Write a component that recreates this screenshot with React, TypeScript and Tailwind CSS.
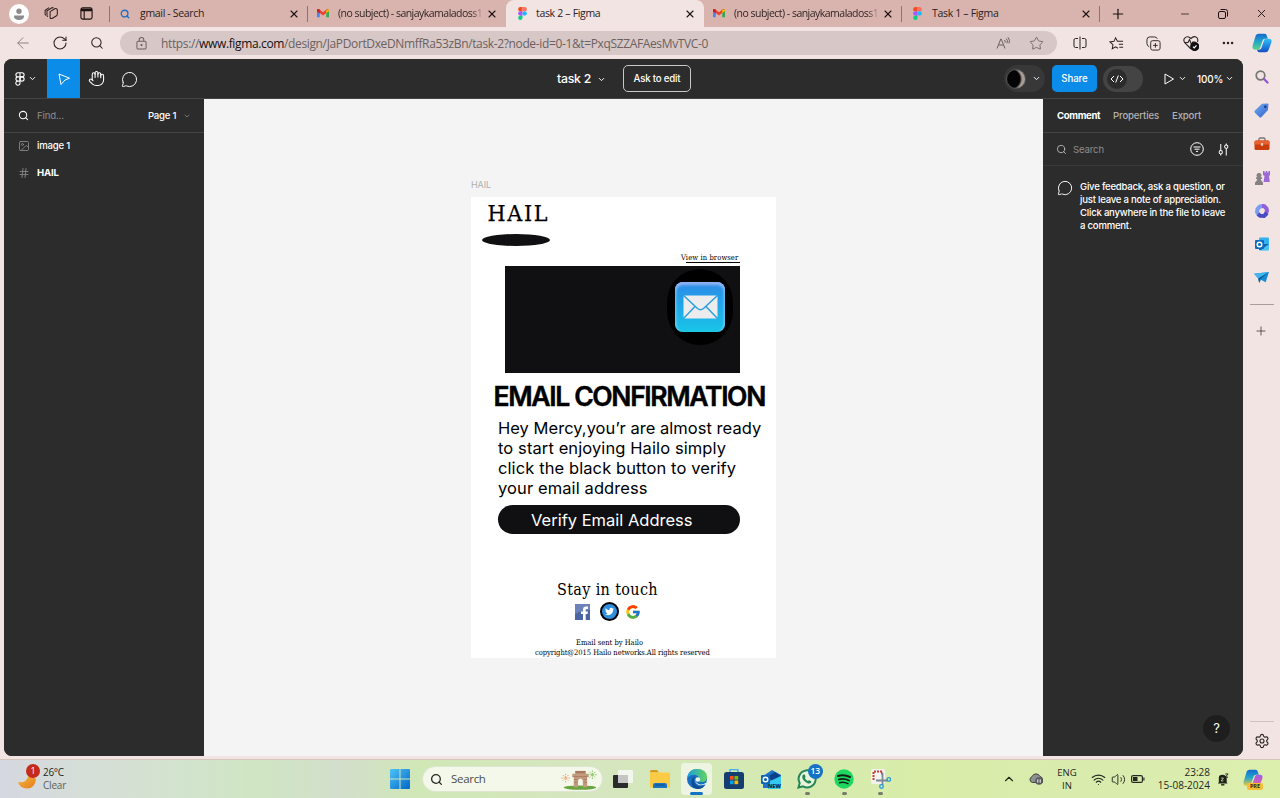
import React from "react";
import {
  ArrowLeft, ChevronDown, ChevronUp, Ellipsis, Hand, Hash, Image as ImageIcon,
  MessageCircle, Minus, Plus, RotateCw, Search, Settings, Star, Volume2, Wifi, X,
} from "lucide-react";
import { FcGoogle } from "react-icons/fc";

type P = { className?: string };

const Gmail = ({ className = "" }: P) => (
  <svg viewBox="0 0 24 18" className={className}>
    <path d="M0 2v14.5h5.5V7z" fill="#4285f4" />
    <path d="M24 2v14.5h-5.5V7z" fill="#34a853" />
    <path d="M0 2.5C0 0 2.8-.8 4.5.7L12 6.5 19.500.7C21.200-.8 24 0 24 2.500L18.500 8 12 13 5.500 8z" fill="#ea4335" />
    <path d="M18.500 1.500 24 .8V4l-5.500 4.300z" fill="#fbbc04" />
    <path d="M0 2v3l5.500 4V1.500C3-.5 0 0 0 2z" fill="#c5221f" />
  </svg>
);

const FigmaColor = ({ className = "" }: P) => (
  <svg viewBox="0 0 24 36" className={className}>
    <path d="M6 0h6v12H6A6 6 0 0 1 6 0z" fill="#f24e1e" />
    <path d="M12 0h6a6 6 0 0 1 0 12h-6z" fill="#ff7262" />
    <path d="M6 12h6v12H6a6 6 0 0 1 0-12z" fill="#a259ff" />
    <circle cx="18" cy="18" r="6" fill="#1abcfe" />
    <path d="M6 24h6v6a6 6 0 1 1-6-6z" fill="#0acf83" />
  </svg>
);

const Copilot = ({ className = "", pink = false }: P & { pink?: boolean }) => (
  <svg viewBox="0 0 24 24" className={className}>
    <defs>
      <linearGradient id={pink ? "cpA" : "cbA"} x1="0" y1="0" x2="0" y2="1">
        <stop offset="0" stopColor="#1769d2" />
        <stop offset=".5" stopColor="#23a7c8" />
        <stop offset="1" stopColor={pink ? "#f0c63e" : "#5bd28b"} />
      </linearGradient>
      <linearGradient id={pink ? "cpB" : "cbB"} x1="0" y1="0" x2="0" y2="1">
        <stop offset="0" stopColor={pink ? "#a25be8" : "#2fc0f5"} />
        <stop offset="1" stopColor={pink ? "#f0659a" : "#1450c8"} />
      </linearGradient>
    </defs>
    <path d="M8 1h7c2 0 2.500 1.500 3 3l1 3h-3c-2 0-3 1-3.600 3L10 17c-.6 2-1.500 3-3.500 3H3.500C1 20 0 18 .8 15L4 4.500C4.700 2 6 1 8 1z" fill={`url(#${pink ? "cpA" : "cbA"})`} />
    <path d="M16 23H9c-2 0-2.500-1.500-3-3h2c2 0 3-1 3.600-3L14 10c.6-2 1.500-3 3.500-3h3C23 7 24 8.500 23.200 11.500L20 20c-.7 2-2 3-4 3z" fill={`url(#${pink ? "cpB" : "cbB"})`} />
  </svg>
);

function Tab({ icon, title, active, sep, long }: { icon: React.ReactNode; title: string; active?: boolean; sep?: boolean; long?: boolean }) {
  return (
    <div className={`flex h-[27px] w-[198px] shrink-0 items-center ${sep ? "" : "pr-[8px]"} ${active ? "rounded-t-lg bg-[#f1e4e2]" : ""}`}>
      <div className="flex w-[30px] justify-center">{icon}</div>
      <div className={`w-[148px] whitespace-nowrap text-[10.500px] ${long ? "bg-[linear-gradient(to_right,#2b2020_90%,#cfa9a3_98%)] bg-clip-text tracking-[-0.520px] text-transparent" : "tracking-[-0.320px] text-[#2b2020]"}`}>
        {title}
      </div>
      <X size={12} strokeWidth={2.200} className="ml-auto shrink-0 text-[#1b1313]" />
      {sep && <div className="ml-[7px] h-4 w-px shrink-0 bg-[#8c7370]" />}
    </div>
  );
}

function TabStrip() {
  return (
    <div className="flex h-[27px] items-center bg-[#d9b4ae]">
      <div className="flex w-[109px] items-center">
        <div className="ml-[9px] flex size-5 items-center justify-center rounded-full bg-white">
          <svg viewBox="0 0 12 12" className="size-3" fill="#8c8c8c"><circle cx="6" cy="3.200" r="2.700" /><path d="M1 7.500h10v1c0 2-2 3.500-5 3.500s-5-1.500-5-3.500z" /></svg>
        </div>
        <svg viewBox="0 0 16 16" className="ml-[15px] size-[15px]" fill="none" stroke="#2b1e1c" strokeWidth="1.100">
          <path d="M6.500 6 11.500 3q2-.8 2.700 1v4.500q0 1.500-1.200 2.200l-4.500 2.600q-2 .6-2-1.300z" />
          <path d="M4 11.500q-.8-.4-.8-1.600V5l5.300-3.200q1-.3 1.500.5M1.800 10q-.6-.5-.6-1.500V4.500L5.500 1.800" />
        </svg>
        <svg viewBox="0 0 14 14" className="ml-[21px] size-[13px]" fill="none" stroke="#1b1211" strokeWidth="1.200">
          <rect x="1" y="1" width="12" height="12" rx="2" /><path d="M1 3.200h12" strokeWidth="2.800" /><path d="M4.500 4v9" />
        </svg>
      </div>
      <div className="h-4 w-px bg-[#8c7370]" />
      <div className="flex w-[990px] items-center">
        <Tab sep icon={<Search size={10} strokeWidth={3.200} className="text-[#1f6fc4]" />} title="gmail - Search" />
        <Tab long icon={<Gmail className="h-[9px] w-3" />} title="(no subject) - sanjaykamaladoss1" />
        <Tab active icon={<FigmaColor className="ml-[2px] h-[13px] w-[9px]" />} title="task 2 – Figma" />
        <Tab long sep icon={<Gmail className="h-[9px] w-3" />} title="(no subject) - sanjaykamaladoss1" />
        <Tab sep icon={<FigmaColor className="h-[13px] w-[9px]" />} title="Task 1 – Figma" />
      </div>
      <Plus size={16} strokeWidth={1.800} className="ml-[10px] text-[#1b1211]" />
      <Minus size={12} strokeWidth={1.500} className="ml-[53px] text-[#1b1211]" />
      <svg viewBox="0 0 10 10" className="ml-[27px] size-[10px]" fill="none" stroke="#1b1211" strokeWidth="1"><rect x=".5" y="2.500" width="7" height="7" rx="1.500" /><path d="M2.500.5h5q2 0 2 2v5" /></svg>
      <X size={13} strokeWidth={1.700} className="ml-[27px] text-[#1b1211]" />
    </div>
  );
}

const cell = "flex w-[37px] shrink-0 items-center justify-center";

function AddressBar() {
  return (
    <div className="flex h-8 items-center bg-[#f1e4e2] text-[#2b2322]">
      <div className="flex w-[120px] pl-[4px]">
        <div className={cell}><ArrowLeft size={18} strokeWidth={1.300} className="text-[#8d8180]" /></div>
        <div className={cell}><RotateCw size={16} strokeWidth={1.600} /></div>
        <div className={cell}><Search size={14} strokeWidth={1.800} /></div>
      </div>
      <div className="flex h-6 w-[937px] items-center rounded-full bg-[#d7c8c7] text-[#6b6160]">
        <svg viewBox="0 0 12 14" className="ml-[16px] h-[13px] w-[11px]" fill="none" stroke="currentColor" strokeWidth="1.100"><rect x="1" y="4.500" width="10" height="8.500" rx="1.500" /><path d="M3.500 4.500V3a2.500 2.500 0 0 1 5 0v1.500" /><circle cx="6" cy="8.700" r=".7" fill="currentColor" /></svg>
        <div className="ml-[14px] mt-px w-[830px] whitespace-nowrap text-[12px] tracking-[-0.360px]">
          https://<span className="text-[#161010]">www.figma.com</span>/design/JaPDortDxeDNmffRa53zBn/task-2?node-id=0-1&amp;t=PxqSZZAFAesMvTVC-0
        </div>
        <div className="flex w-[24px] justify-center">
          <svg viewBox="0 0 14 12" className="h-3 w-[14px]" fill="none" stroke="currentColor" strokeWidth="1"><path d="M1 11.500 4.800 2h.4L9 11.500M2.500 8h5M8.500 3q1 1 .6 2.700M10.200 1.500q2 2 .8 4.700M12 .3q2.400 3 1 6" /></svg>
        </div>
        <div className="flex w-[42px] justify-center"><Star size={15} strokeWidth={1.400} /></div>
      </div>
      <div className="ml-[4px] flex">
        <div className={cell}><svg viewBox="0 0 14 14" className="size-[14px]" fill="none" stroke="currentColor"><path d="M7 .5v13M5 2.500H2.500q-1.500 0-1.500 1.500v6q0 1.500 1.500 1.500H5M9 2.500h2.500Q13 2.500 13 4v6q0 1.500-1.500 1.500H9" /></svg></div>
        <div className={cell}><svg viewBox="0 0 16 16" className="size-[15px]" fill="none" stroke="currentColor" strokeWidth="1.100"><path d="M9.500 13 7 11.500 3.500 13.500l.7-4.200L1 6.300l4.300-.6L7 2l2 3.700h6M10.500 8.700H15M11 12h4" /></svg></div>
        <div className={cell}><svg viewBox="0 0 16 16" className="size-[15px]" fill="none" stroke="currentColor" strokeWidth="1"><rect x="5" y="5" width="10" height="10" rx="2" /><path d="M10 7.500v5M7.500 10h5M3.500 11.500Q1 10.500 1 8V4q0-3 3-3h5q2.500 0 3 2" /></svg></div>
        <div className={cell}><svg viewBox="0 0 16 16" className="size-[16px]" fill="none" stroke="currentColor" strokeWidth="1.100"><path d="M8 14 2 8Q0 5.500 1.500 3.300 4.500 0 8 3.500 11.500 0 14.200 3 15.300 5 14.500 7" /><path d="M1.500 7.500H5l1.500-3 2 5 1.300-2.500h2.700" /><circle cx="11.700" cy="11.500" r="4" fill="#111" stroke="#111" /><path d="m10 11.700 1.200 1.200 2.300-2.600" stroke="#fff" /></svg></div>
        <div className={cell}><Ellipsis size={14} strokeWidth={2.300} /></div>
      </div>
      <Copilot className="ml-[6px] size-[20px]" />
    </div>
  );
}

const Cursor = ({ className = "" }: P) => (
  <svg viewBox="0 0 12 12" className={className} fill="none" stroke="white" strokeWidth="1" strokeLinejoin="round"><path d="M1 1l10.500 4.200L7 7l-4 4.500z" /></svg>
);

function Toolbar() {
  return (
    <div className="flex h-10 items-center border-b border-[#444] bg-[#2c2c2c] text-white">
      <div className="flex w-[43px] items-center pl-[11px]">
        <svg viewBox="0 0 10 14" className="h-[14px] w-[10px]" fill="none" stroke="white" strokeWidth="1.100"><path d="M5 .7H3a2.100 2.100 0 0 0 0 4.200h2zM5 .7h2a2.100 2.100 0 0 1 0 4.200H5zM5 4.900H3a2.100 2.100 0 0 0 0 4.200h2zM5 9.100H3a2.100 2.100 0 1 0 2 2.100z" /><circle cx="7" cy="7" r="2.100" /></svg>
        <ChevronDown size={9} strokeWidth={2.500} className="ml-[3px]" />
      </div>
      <div className="flex h-[39px] w-[33px] items-center justify-center bg-[#0c8ce9]"><Cursor className="size-3" /></div>
      <div className="flex w-[33px] justify-center"><Hand size={17} strokeWidth={1.500} /></div>
      <div className="flex w-[33px] justify-center"><MessageCircle size={17} strokeWidth={1.400} className="mt-px" /></div>
      <div className="ml-[411px] w-[66px] pt-px text-[12.300px] font-medium tracking-[-0.250px]">
        <div className="flex items-center"><span className="w-[40px] whitespace-nowrap">task 2</span><ChevronDown size={9} strokeWidth={2.500} /></div>
      </div>
      <div className="flex h-[27px] w-[68px] items-center justify-center rounded-[5px] border border-[#c8c8c8] pt-[2px] text-[9.700px] font-medium tracking-[-0.200px]">Ask to edit</div>
      <div className="ml-[313px] flex h-[27px] w-[41px] items-center rounded-full bg-[#383838] pl-[2px]">
        <div className="size-5 rounded-full border border-[#555] bg-[radial-gradient(circle_at_20%_50%,#050505_55%,#a89d96_68%)]" />
        <ChevronDown size={9} strokeWidth={2.500} className="ml-[6px]" />
      </div>
      <div className="ml-[7px] flex h-[27px] w-[45px] items-center justify-center rounded-[5px] bg-[#0c8ce9] pt-[2px] text-[9.700px] font-medium tracking-[-0.100px]">Share</div>
      <div className="ml-[6px] flex h-[26px] w-10 items-center rounded-full bg-[#444] pl-[4px]">
        <div className="flex size-[20px] items-center justify-center rounded-full bg-[#2c2c2c]">
          <svg viewBox="0 0 14 8" className="h-2 w-[14px]" fill="none" stroke="white" strokeWidth="1"><path d="M4 1 1 4l3 3M10 1l3 3-3 3M8.300.5l-2.600 7" /></svg>
        </div>
      </div>
      <svg viewBox="0 0 10 12" className="ml-[21px] h-3 w-[10px]" fill="none" stroke="white" strokeLinejoin="round"><path d="M1 1v10l8.500-5z" /></svg>
      <ChevronDown size={9} strokeWidth={2.500} className="ml-[4px]" />
      <span className="ml-[10px] w-[28px] pt-[2px] text-[9.900px] font-medium tracking-[-0.100px]">100%</span>
      <ChevronDown size={9} strokeWidth={2.500} />
    </div>
  );
}

function LeftPanel() {
  return (
    <div className="w-[200px] bg-[#2c2c2c] text-[9.600px] font-medium tracking-[-0.150px] text-white">
      <div className="flex h-[34px] items-center border-b border-[#444] pl-[14px]">
        <Search size={11} strokeWidth={2.200} className="-mt-px" />
        <span className="ml-[8px] w-[111px] pt-[2px] font-normal text-[#8c8c8c]">Find...</span>
        <span className="w-[35px] whitespace-nowrap pt-[2px] tracking-[-0.250px]">Page 1</span>
        <ChevronDown size={8} strokeWidth={2} className="mt-px text-[#999]" />
      </div>
      <div className="flex h-[27px] items-center pl-[14px]"><ImageIcon size={12} strokeWidth={1.700} className="-mt-px text-[#8c8c8c]" /><span className="ml-[7px] tracking-[-0.220px]">image 1</span></div>
      <div className="flex h-[27px] items-center pl-[14px]"><Hash size={12} strokeWidth={1.700} className="-mt-px text-[#8c8c8c]" /><span className="ml-[7px] font-bold">HAIL</span></div>
    </div>
  );
}

const slab = "font-['DejaVu_Serif_Condensed','DejaVu_Serif',serif]";

function Canvas() {
  return (
    <div className="w-[839px] bg-[#f4f4f4] pl-[267px] pt-[79px]">
      <div className="h-[19px] text-[9px] leading-[13px] tracking-[-0.1px] text-[#b0b0b0]">HAIL</div>
      <div className="relative h-[461px] w-[305px] bg-white text-black">
        <div className={`absolute left-[16.500px] top-[1px] text-[23px] leading-[31px] tracking-[1.700px] [-webkit-text-stroke:0.250px_black] ${slab}`}>HAIL</div>
        <div className="absolute left-[10.500px] top-[37px] h-3 w-[68px] rounded-[50%] bg-[#101012]" />
        <div className={`absolute left-[210px] top-[55px] whitespace-nowrap text-[7.500px] leading-[12px] tracking-[0.120px] ${slab}`}>View in browser</div>
        <div className="absolute left-[215px] top-[65px] h-px w-[54px] bg-black" />
        <div className="absolute left-[34px] top-[69px] h-[107px] w-[235px] bg-[#101012]">
          <div className="ml-[162px] mt-[3px] flex h-[76px] w-[66px] items-center justify-center rounded-[33px] bg-black">
            <div className="flex size-[50px] items-center justify-center rounded-[8px] bg-[linear-gradient(to_bottom,#2f8be6,#1fa4ea_45%,#19c6e6)] shadow-[inset_0_4px_3px_-1px_#93b4f4,inset_3px_0_3px_-2px_#7ccdf5,inset_-3px_0_3px_-2px_#7ccdf5]">
              <svg viewBox="0 0 35 24" className="h-6 w-[35px]"><rect x=".5" y=".5" width="34" height="23" fill="#ececee" /><path d="M0 0 14.500 13.500q3 2.500 6 0L35 0M0 24 12 11.500M35 24 23 11.500" fill="none" stroke="#2aa0dc" strokeWidth="1.500" /></svg>
            </div>
          </div>
        </div>
        <div className="absolute left-[22.500px] top-[181px] whitespace-nowrap text-[26.500px] font-semibold leading-[36px] tracking-[-1.350px] [-webkit-text-stroke:0.500px_black]">EMAIL CONFIRMATION</div>
        <div className="absolute left-[27px] top-[221px] whitespace-nowrap text-[16.500px] leading-[20px] tracking-[0.100px]">
          <span className="tracking-[0.030px]">Hey Mercy,you’r are almost ready</span><br />to start enjoying Hailo simply<br />click the black button to verify<br />your email address
        </div>
        <div className="absolute left-[27px] top-[308px] flex h-[29px] w-[242px] items-center whitespace-nowrap rounded-full bg-[#101012] pl-[33px] pt-px text-[16.500px] text-white">Verify Email Address</div>
        <div className={`absolute left-[86px] top-[382px] whitespace-nowrap text-[16px] leading-[22px] tracking-[0.350px] ${slab}`}>Stay in touch</div>
        <svg viewBox="0 0 15 16" className="absolute left-[104px] top-[407px] h-4 w-[15px]"><rect width="15" height="16" fill="#4c66a4" /><path d="M0 0h15v6Q7 6 0 10z" fill="#6d84ba" /><path d="M8 16v-6H6V7.500h2V5.500Q8 2.500 11 2.500h2V5h-1.300q-1 0-1 1v1.500H13l-.4 2.500h-1.900v6z" fill="#fff" /></svg>
        <div className="absolute left-[129px] top-[405px] flex size-[19px] items-center justify-center rounded-full border-2 border-black bg-[#2f8fdf]">
          <svg viewBox="0 0 24 24" className="size-[9px]" fill="#fff"><path d="M23.950 4.570a10 10 0 0 1-2.820.77 4.960 4.960 0 0 0 2.160-2.720c-.95.550-2 .960-3.120 1.180a4.920 4.920 0 0 0-8.380 4.480C7.690 8.090 4.070 6.130 1.640 3.160a4.920 4.920 0 0 0 1.520 6.570 4.900 4.900 0 0 1-2.230-.61v.06a4.920 4.920 0 0 0 3.950 4.830 5 5 0 0 1-2.210.08 4.940 4.940 0 0 0 4.600 3.420A9.870 9.870 0 0 1 0 19.540a13.990 13.990 0 0 0 7.550 2.210c9.050 0 14-7.500 14-13.980 0-.21 0-.42-.02-.63a9.940 9.940 0 0 0 2.460-2.550z" /></svg>
        </div>
        <FcGoogle size={16} className="absolute left-[154px] top-[407px]" />
        <div className={`absolute left-[105px] top-[441px] whitespace-nowrap text-[7.500px] leading-[10px] ${slab}`}>Email sent by Hailo</div>
        <div className={`absolute left-[64px] top-[451px] whitespace-nowrap text-[7.500px] leading-[10px] tracking-[-0.040px] ${slab}`}>copyright@2015 Hailo networks.All rights reserved</div>
      </div>
    </div>
  );
}

function RightPanel() {
  return (
    <div className="flex w-[200px] flex-col bg-[#2c2c2c] text-[9.600px] font-medium tracking-[-0.150px] text-white">
      <div className="flex h-[34px] items-center border-b border-[#444] pl-[14px] pt-px text-[#b3b3b3]">
        <span className="w-[56px] font-bold tracking-[-0.350px] text-white">Comment</span>
        <span className="w-[59px]">Properties</span>
        <span>Export</span>
      </div>
      <div className="flex h-[33px] items-center border-b border-[#3a3a3a] pl-[13px]">
        <Search size={11} strokeWidth={1.700} className="text-[#ccc]" />
        <span className="ml-[6px] w-[117px] pt-[2px] font-normal text-[#8c8c8c]">Search</span>
        <svg viewBox="0 0 14 14" className="size-[14px]" fill="none" stroke="white" strokeWidth="1"><circle cx="7" cy="7" r="6.300" /><path d="M3.500 5h7M4.500 7.200h5M6 9.400h2" /></svg>
        <svg viewBox="0 0 12 14" className="ml-[14px] h-[13px] w-[11px]" fill="none" stroke="white" strokeWidth="1.100"><path d="M3 1v7M3 12v1.500M9 6v7.500M9 .5V2" /><circle cx="3" cy="10" r="1.800" /><circle cx="9" cy="4" r="1.800" /></svg>
      </div>
      <div className="mt-[13.500px] flex pl-[14px]">
        <MessageCircle size={16} strokeWidth={1.400} />
        <p className="ml-[7px] whitespace-nowrap leading-[13.300px] tracking-[-0.240px]">Give feedback, ask a question, or<br />just leave a note of appreciation.<br />Click anywhere in the file to leave<br />a comment.</p>
      </div>
      <div className="mb-[14px] ml-[160px] mt-auto flex size-[27px] items-center justify-center rounded-full bg-[#1e1e1e] text-[13px] font-normal">?</div>
    </div>
  );
}

const slot = "flex h-[33.300px] items-center justify-center";

function Sidebar() {
  return (
    <div className="flex h-[700px] w-[37px] flex-col bg-[#f1e4e2]">
      <div className={`${slot} mt-[1px]`}><svg viewBox="0 0 14 14" className="size-[14px]" fill="none" strokeLinecap="round"><circle cx="5.500" cy="5.500" r="4.300" stroke="#777" strokeWidth="1.700" /><path d="m9 9 3.500 3.500" stroke="#9057d6" strokeWidth="2.300" /></svg></div>
      <div className={`${slot} mt-[1px]`}><svg viewBox="0 0 14 14" className="size-[15px]"><defs><linearGradient id="tagG" x1="0" y1="0" x2="1" y2="1"><stop offset="0" stopColor="#6fb0ef" /><stop offset="1" stopColor="#355fd0" /></linearGradient></defs><path d="M7.500.8 12.500.5q1 0 1 1L13 6.500 7 13q-1 1-2 0L.8 9q-.8-1 0-2z" fill="url(#tagG)" /><circle cx="10.500" cy="3.500" r="1.200" fill="#173b87" /></svg></div>
      <div className={slot}><svg viewBox="0 0 16 14" className="h-[14px] w-4"><path d="M5 4V2.200Q5 1 6.200 1h3.600Q11 1 11 2.200V4" fill="none" stroke="#777" strokeWidth="1.300" /><rect x=".5" y="3.500" width="15" height="9.500" rx="1.500" fill="#c93c0c" /><path d="M.5 5q0-1.500 1.500-1.500h12q1.500 0 1.500 1.500v2.500H.5z" fill="#e8602f" /><rect x="6.900" y="6.200" width="2.200" height="2.500" fill="#f9d9c8" /></svg></div>
      <div className={slot}><svg viewBox="0 0 16 16" className="size-4"><path d="M9 1h1.500v1.500h1.200V1h1.600v1.500h1.200V1H16v4l-1 1 .8 6H9.500L10.500 6 9 5z" fill="#9b6bd3" /><path d="M5 3a2.300 2.300 0 0 1 1.500 4.200H8V9H6.700q.3 2 2.300 3.500V15H1v-2.500Q3 11 3.300 9H2V7.200h1.500A2.300 2.300 0 0 1 5 3z" fill="#858083" /></svg></div>
      <div className={slot}>
        <svg viewBox="0 0 16 16" className="size-4" fill="none" strokeWidth="4" strokeLinejoin="round">
          <path d="M8.500 3 6 3.500 3.500 6 3 9l1.500 2.500" stroke="#7c9cf3" />
          <path d="M8 3h2l2.500 2.500.5 2.500-1 2.500" stroke="#8f62d9" />
          <path d="m4 11 2 1.800 4 .2 3-3" stroke="#4a4cc4" />
        </svg>
      </div>
      <div className={slot}><svg viewBox="0 0 16 16" className="size-4"><rect x="5" y="1.500" width="10" height="13" rx="1" fill="#35b1ed" /><path d="M5 8h10v6H5z" fill="#1264b5" /><path d="M15 8v6H7z" fill="#4bc3f3" /><rect x="1" y="4" width="9" height="9" rx="1" fill="#0f6cbd" /><circle cx="5.500" cy="8.500" r="2.300" fill="none" stroke="#fff" strokeWidth="1.400" /></svg></div>
      <div className={slot}><svg viewBox="0 0 16 14" className="h-[13px] w-[15px]"><path d="M0 3 16 1 12.500 12 7.500 9.500 5.500 13 4.500 8z" fill="#168bd3" /><path d="M0 3 16 1 4.500 8z" fill="#41b5ee" /><path d="M4.500 8 16 1 6.500 9 5.500 13z" fill="#0b558e" /></svg></div>
      <div className="ml-[7px] mt-[10px] h-px w-6 shrink-0 bg-[#ab9d9b]" />
      <Plus size={14} strokeWidth={1.300} className="ml-[11px] mt-[19px] shrink-0 text-[#3a302f]" />
      <div className="ml-[7px] mt-auto h-px w-6 shrink-0 bg-[#cfc2c0]" />
      <Settings size={16} strokeWidth={1.700} className="mb-[10px] ml-[11px] mt-[11px] shrink-0 text-[#2b2322]" />
    </div>
  );
}

const task = "relative flex h-8 w-[36.800px] shrink-0 items-center justify-center";
const Dot = () => <div className="absolute bottom-0 h-[3px] w-[5px] rounded-full bg-[#777c6d]" />;

function Taskbar() {
  return (
    <div className="flex h-[39px] items-center border-t border-[#d5c5bc] bg-[linear-gradient(to_right,#d5d8e0_0px,#d6dfd6_100px,#d2e4cc_200px,#cfe6c2_250px,#d3dfcc_340px,#d0e7b6_420px,#d6e6c0_600px,#d3e8b6_700px,#d9eda9_920px,#d9ecae_1100px,#dcefad_1280px)] text-[#252820]">
      <svg viewBox="0 0 22 24" className="ml-[17px] h-6 w-[22px] shrink-0"><defs><linearGradient id="moon" x1="0" y1="0" x2="1" y2="1"><stop offset="0" stopColor="#f7b73c" /><stop offset="1" stopColor="#e57d1d" /></linearGradient></defs><path d="M1 15q8 2 11-7l7 4q-1 9.500-9 9.500-7 0-9-6.500z" fill="url(#moon)" /></svg>
      <div className="-ml-[13px] -mt-[16px] flex size-[14px] shrink-0 items-center justify-center rounded-full bg-[#c42b1c] text-[9px] text-white">1</div>
      <div className="ml-[3px] w-[347px] shrink-0 text-[10px] leading-[13px] tracking-[-0.3px]">26°C<br /><span className="tracking-[-0.200px] text-[#5c6158]">Clear</span></div>
      <svg viewBox="0 0 20 20" className="size-5 shrink-0"><defs><linearGradient id="winG" x1="0" y1="0" x2="1" y2="1"><stop offset="0" stopColor="#4fc4f7" /><stop offset="1" stopColor="#0067c8" /></linearGradient></defs><path d="M1 0h8.500v9.500H0V1q0-1 1-1zM10.500 0H19q1 0 1 1v8.500h-9.500zM0 10.500h9.500V20H1q-1 0-1-1zM10.500 10.500H20V19q0 1-1 1h-8.500z" fill="url(#winG)" /></svg>
      <div className="ml-[12px] flex h-[26px] w-[181px] shrink-0 items-center rounded-full border border-[#dde6d0] bg-[#f3f8ea]">
        <Search size={13} strokeWidth={2.400} className="ml-[7px]" />
        <span className="ml-[8px] w-[109px] text-[11.500px] tracking-[-0.300px] text-[#4a4e44]">Search</span>
        <svg viewBox="0 0 38 22" className="h-[21px] w-[38px] shrink-0">
          <ellipse cx="20" cy="19.500" rx="17" ry="2.300" fill="#6aa640" />
          <path d="M12 5h17v3h-1.500v11H23v-7q-2.500-4-5 0v7h-4.500V8H12z" fill="#c39a7c" /><path d="M15 2h11v3H15z" fill="#a57a5e" /><path d="M12 8h17M14 11h3M24 11h3M14 14h3M24 14h3" stroke="#9a7054" strokeWidth=".7" />
          <g strokeDasharray="1.500 1" strokeWidth="1"><path d="M5 5v9M.5 9.500h9M2 6.300l6 6M8 6.300l-6 6" stroke="#e9a061" /><path d="M33 1.500v9M28.500 6h9M30 3l6 6M36 3l-6 6" stroke="#7fbe5a" /></g>
        </svg>
      </div>
      <div className="ml-[2px] flex">
        <div className={task}><svg viewBox="0 0 20 18" className="h-[18px] w-5"><rect x="0" y="5" width="15" height="13" rx="1" fill="#2b2b2b" /><rect x="5" y="0" width="15" height="13" rx="1" fill="#f8f8f6" fillOpacity=".85" /><path d="M5 5h10v8H5z" fill="#c5c5c5" /></svg></div>
        <div className={task}><svg viewBox="0 0 20 18" className="h-[18px] w-5"><path d="M0 1.500Q0 0 1.500 0H7l2 2.500h-9z" fill="#d99a17" /><rect y="2.500" width="20" height="15" rx="1.200" fill="#fbcb45" /><path d="M3 18v-3q0-2 2-2h10q2 0 2 2v3z" fill="#1c74c0" /><path d="M5 15h10" stroke="#0d4d8a" /></svg></div>
        <div className={task}>
          <div className="flex h-8 w-[31px] items-center justify-center rounded-[4px] bg-[#edf4e2]">
            <svg viewBox="0 0 20 20" className="size-5">
              <defs>
                <linearGradient id="edgeT" x1="0" y1="0" x2="1" y2="0"><stop offset="0" stopColor="#1b9fe0" /><stop offset="1" stopColor="#63d35b" /></linearGradient>
              </defs>
              <circle cx="10" cy="10" r="10" fill="#176fc4" />
              <path d="M0 9Q1.500 0 10 0q9.500 0 10 8 0 5-5 5-4 0-3-2.200Q12.500 7 8.500 6 3.500 5 0 9z" fill="url(#edgeT)" />
              <path d="M8 7.500q-3 6 2.500 9.300 4 2 8-1-3.500 5-9 4Q3.500 18 4.500 12 5.500 8 8 7.500z" fill="#104c94" />
              <path d="M8.500 8.500Q7 13 11.500 15q4 1.500 7.500-1.200l1 .7Q16 17 11.500 16 6.500 13 8.500 8.500z" fill="#edf4e2" />
              <circle cx="10.800" cy="10.500" r="2.300" fill="#edf4e2" />
            </svg>
          </div>
          <div className="absolute bottom-0 h-[3px] w-[13px] rounded-full bg-[#1572c4]" />
        </div>
        <div className={task}><svg viewBox="0 0 20 20" className="size-5"><path d="M6 4V1.500q0-1 1-1h6q1 0 1 1V4" fill="none" stroke="#42b0eb" strokeWidth="1.500" /><rect y="3" width="20" height="17" rx="2.500" fill="#163d70" /><path d="M6 7h3.700v3.700H6z" fill="#f25022" /><path d="M10.500 7h3.700v3.700h-3.700z" fill="#7fba00" /><path d="M6 11.500h3.700v3.700H6z" fill="#00a4ef" /><path d="M10.500 11.500h3.700v3.700h-3.700z" fill="#ffb900" /></svg></div>
        <div className={task}>
          <svg viewBox="0 0 20 19" className="h-[19px] w-5"><path d="M2 6 11 0l9 5v13H2z" fill="#1d73c9" /><path d="m6 7 8-5 6 4-8 5z" fill="#0a438c" /><path d="m7 12 13-6v12q0 1-1 1H7z" fill="#35c8ee" /><rect y="5" width="9" height="9" rx="1" fill="#0e65b8" /><circle cx="4.500" cy="9.500" r="2.300" fill="none" stroke="#fff" strokeWidth="1.400" /></svg>
          <span className="absolute bottom-[6px] right-[8px] text-[5.500px] font-black leading-[6px] text-[#072c47]">NEW</span>
        </div>
        <div className={task}>
          <svg viewBox="0 0 20 20" className="size-5"><path d="M1.500 18.500 2.700 14A8.500 8.500 0 1 1 6 17.300z" fill="#e8f4da" stroke="#238654" strokeWidth="2" /><path d="M6.500 5.500q1.700-.7 2 2.500l-.7 1q1 2 3 3l1.200-.8q3 1 2.200 2.300-1.500 2-4.500.2-4-2.500-4.500-5.500-.1-2 1.300-2.700z" fill="#238654" /></svg>
          <div className="absolute right-[3px] top-[1px] flex size-[15px] items-center justify-center rounded-full bg-[#1572c4] text-[8.500px] font-semibold text-white">13</div>
          <Dot />
        </div>
        <div className={task}><svg viewBox="0 0 20 20" className="size-5" fill="none" stroke="#101e13" strokeLinecap="round"><circle cx="10" cy="10" r="9.700" fill="#1ed760" stroke="none" /><path d="M4 7q6-2 12 1" strokeWidth="2" /><path d="M4.800 10.500Q10 9 15 11.500" strokeWidth="1.700" /><path d="M5.500 13.700Q10 12.500 14 14.700" strokeWidth="1.400" /></svg><Dot /></div>
        <div className={task}><svg viewBox="0 0 20 20" className="size-5"><rect width="14" height="15" rx="2" fill="#f4f3ef" /><path d="M2.500 11V2.500H11v3" fill="none" stroke="#c83d31" strokeWidth="2" strokeDasharray="2 1" /><path d="M11.500 4v12M5 11.500h12" stroke="#788894" strokeWidth="1.800" /><circle cx="10.500" cy="17.500" r="1.800" fill="none" stroke="#2399d8" strokeWidth="1.300" /><circle cx="17.800" cy="10.500" r="1.800" fill="none" stroke="#2399d8" strokeWidth="1.300" /></svg><Dot /></div>
      </div>
      <div className="ml-auto flex items-center">
        <ChevronUp size={14} strokeWidth={2} />
        <svg viewBox="0 0 14 12" className="ml-[13px] h-3 w-[14px]"><path d="M3.500 9.500A3 3 0 0 1 3 3.700 4.300 4.300 0 0 1 11 3.500q2.500.5 2.500 3V9.500z" fill="#8e9191" stroke="#333" strokeWidth=".9" /><circle cx="10" cy="8" r="3.800" fill="#58595b" /><path d="M8.800 6.300v3.400M11.200 6.300v3.400" stroke="#fff" /></svg>
        <div className="ml-[11px] w-[26px] text-center text-[9.500px] leading-[13px]">ENG<br />IN</div>
        <Wifi size={15} strokeWidth={1.800} className="ml-[11px]" />
        <Volume2 size={15} strokeWidth={1.500} className="ml-[5px]" />
        <svg viewBox="0 0 14 8" className="ml-[5px] h-2 w-[14px]"><rect x=".6" y=".6" width="10.800" height="6.800" rx="1.500" fill="none" stroke="#252820" strokeWidth="1.200" /><path d="M2 2h4.500v4H2zM12.300 2.500h1.200v3h-1.200z" fill="#252820" /></svg>
        <div className="ml-[8px] w-[57px] whitespace-nowrap text-right text-[10px] leading-[13px]">23:28<br />15-08-2024</div>
        <svg viewBox="0 0 12 14" className="ml-[7px] h-[13px] w-[12px]"><path d="M1.500 10V5Q1.500 2 5.500 2T10 6v4l1 1.300H.5z" fill="#20221c" /><path d="M4 12.700h3.500" stroke="#20221c" strokeWidth="1.500" /><path d="M4 5.500h2.500L4 8.500h2.500" stroke="#dcefad" strokeWidth=".8" fill="none" /><path d="M8.500 1h3L8.500 4.500h3" stroke="#20221c" fill="none" /></svg>
        <div className="relative ml-[14px] mr-[17px]">
          <Copilot pink className="size-5" />
          <div className="absolute -bottom-[1px] left-[4px] flex h-[7px] w-4 items-center justify-center rounded-[2px] bg-[#f6be36] text-[5.500px] font-bold leading-none">PRE</div>
        </div>
      </div>
    </div>
  );
}

export default function App() {
  return (
    <div className="flex h-[798px] w-[1280px] flex-col overflow-hidden bg-[#f1e4e2] font-['Open_Sans','Noto_Sans',sans-serif]">
      <TabStrip />
      <AddressBar />
      <div className="flex h-[700px] pl-[4px]">
        <div className="flex h-[697px] w-[1239px] flex-col overflow-hidden rounded-[8px] bg-[#2c2c2c] font-[Inter,sans-serif]">
          <Toolbar />
          <div className="flex flex-1">
            <LeftPanel />
            <Canvas />
            <RightPanel />
          </div>
        </div>
        <Sidebar />
      </div>
      <Taskbar />
    </div>
  );
}
